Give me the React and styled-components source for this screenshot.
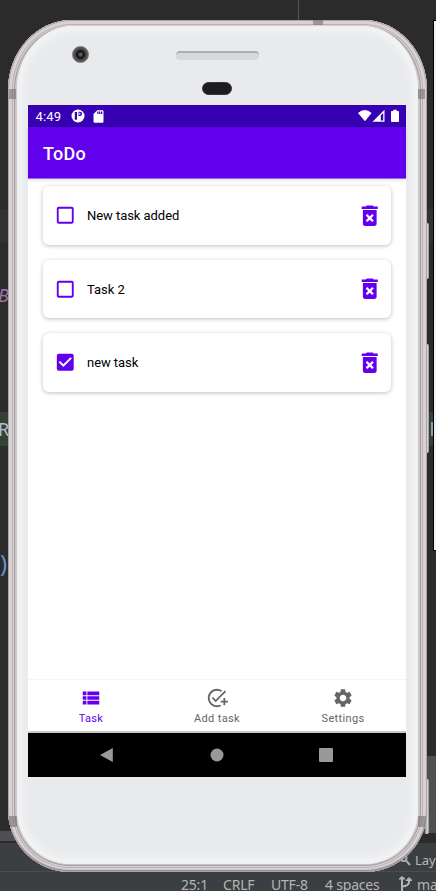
import React, { useState } from "react";
import styled, { createGlobalStyle, css } from "styled-components";
import {
  MdAddTask,
  MdCheckBox,
  MdCheckBoxOutlineBlank,
  MdDeleteForever,
  MdSdCard,
  MdSettings,
  MdViewList,
} from "react-icons/md";

const GlobalStyle = createGlobalStyle`
  * { box-sizing: border-box; }
  body { margin: 0; background: #2b2b2b; overflow: hidden; }
`;

const Desktop = styled.div`
  position: relative;
  width: 436px;
  height: 891px;
  overflow: hidden;
  background: #2b2b2b;
`;

/* Editor window behind the emulator */
const Editor = styled.div`
  display: flex;
  flex-direction: column;
  height: 891px;
  font-family: "Noto Sans", "Open Sans", sans-serif;
`;

const CodeRow = styled.div`
  flex: none;
  display: flex;
  align-items: center;
  justify-content: space-between;
  height: ${(p) => p.$h}px;
  background: ${(p) => p.$bg || "#2b2b2b"};
  font: ${(p) => p.$font || '18px "Noto Sans", sans-serif'};
  line-height: 1;
  color: ${(p) => p.$color || "#a9b7c6"};
`;

const Glyph = styled.span`
  margin-left: ${(p) => p.$shift || 0}px;
`;

const Caret = styled.span`
  width: 3px;
  height: 14px;
  margin-right: 2px;
  background: #7f9fc4;
`;

const PanelRow = styled.div`
  flex: none;
  display: grid;
  grid-template-columns: 218px 218px;
  height: 85px;
`;

const PanelColumn = styled.div`
  display: flex;
  flex-direction: column;
`;

const Block = styled.div`
  flex: none;
  height: ${(p) => p.$h}px;
  background: ${(p) => p.$bg};
`;

const ToolStrip = styled.div`
  flex: none;
  display: flex;
  align-items: center;
  justify-content: flex-end;
  gap: 4px;
  height: 28px;
  padding-top: 5px;
  background: #3c3f41;
  color: #b4b7b9;
  font-size: 13px;
  white-space: nowrap;
`;

const ToolLabel = styled.span`
  width: 21px;
`;

const StatusStrip = styled.div`
  flex: none;
  display: grid;
  grid-template-columns: 42px 48px 54px 73px 19px 40px;
  height: 20px;
  padding-left: 181px;
  border-top: 1px solid #4a4d4f;
  background: #3c3f41;
  color: #b2b5b7;
  font-size: 14px;
  line-height: 25px;
  letter-spacing: -0.2px;
  white-space: nowrap;
`;

const BranchIcon = styled.svg`
  margin-top: 4px;
`;

const TopGuide = styled.div`
  position: absolute;
  left: 298px;
  top: 0;
  width: 1px;
  height: 21px;
  background: #555;
`;

const SideWindow = styled.div`
  position: absolute;
  left: 433px;
  top: 20px;
  width: 6px;
  height: 531px;
  border: 1px solid #000;
  background: #f3f3f3;
`;

/* Device */
const SideButton = styled.div`
  position: absolute;
  left: 425px;
  top: ${(p) => p.$top}px;
  width: 4px;
  height: ${(p) => p.$h}px;
  border-radius: 0 2px 2px 0;
  background: linear-gradient(90deg, #8f8c8d, #d8d6d5 60%, #8e8c8b);
`;

const Phone = styled.div`
  position: absolute;
  left: 8px;
  top: 20px;
  width: 419px;
  height: 852px;
  padding: 6px 9px 8px;
  border-radius: 64px 64px 62px 62px / 70px 70px 62px 62px;
  overflow: hidden;
  background: #d3cccf;
  box-shadow:
    inset 0 0 0 1px #aba3a6,
    inset 0 -2px 1px 0 #8d8589,
    inset 0 0 0 4px #d9d2d5,
    inset 0 0 0 5px #b9b1b4,
    inset 0 0 0 6px #d9d3d6,
    inset 0 0 0 7px #a39d9f,
    inset 0 0 0 8px #c9c5c7;
`;

const Antenna = styled.div`
  position: absolute;
  left: ${(p) => p.$x}px;
  top: ${(p) => p.$y}px;
  width: ${(p) => p.$w}px;
  height: ${(p) => p.$h}px;
  background: rgba(118, 110, 114, 0.6);
`;

const Face = styled.div`
  display: flex;
  flex-direction: column;
  height: 838px;
  padding: 0 11px;
  border-radius: 56px 56px 54px 54px / 64px 64px 54px 54px;
  background: #e9eaec;
  box-shadow:
    inset 0 0 0 1px #eceeef,
    inset 0 0 10px 4px #f6f7f8;
`;

const Forehead = styled.div`
  flex: none;
  display: grid;
  grid-template-columns: 148px 83px 1fr;
  height: 79px;
`;

const Camera = styled.div`
  width: 17px;
  height: 17px;
  margin: 20px 0 0 44px;
  border: 1px solid #777;
  border-radius: 50%;
  background: radial-gradient(circle at 50% 50%, #685f3c 0 1px, #111824 3px, #1b1c22 4px, #4c4c4e 5.5px, #606063 8px);
`;

const SpeakerColumn = styled.div`
  display: flex;
  flex-direction: column;
  padding-top: 25px;
  gap: 22px;
`;

const Speaker = styled.div`
  width: 83px;
  height: 9px;
  border-radius: 4px;
  border-top: 2px solid #a9adb5;
  background: #d7d9dc;
`;

const Sensor = styled.div`
  width: 30px;
  height: 13px;
  margin-left: 26px;
  border-radius: 7px;
  background: #1d1d21;
  border: 1px solid #34343a;
`;

const Screen = styled.div`
  flex: none;
  display: flex;
  flex-direction: column;
  width: 378px;
  height: 672px;
  background: #fff;
  font-family: Roboto, sans-serif;
`;

const StatusBar = styled.div`
  flex: none;
  display: flex;
  align-items: center;
  height: 22px;
  padding: 0 7px 0 7.5px;
  background: #3700b3;
  color: #fff;
  font-size: 13px;
  font-weight: 400;
  letter-spacing: 0.15px;
`;

const Clock = styled.span`
  width: 35px;
`;

const StatusIcons = styled.div`
  display: flex;
  align-items: center;
  gap: ${(p) => p.$gap}px;
  margin-left: ${(p) => (p.$end ? "auto" : "0")};
  svg { display: block; }
`;

const AppBar = styled.header`
  flex: none;
  position: relative;
  display: flex;
  align-items: center;
  height: 52px;
  padding: 2px 15px 0;
  border-bottom: 1px solid #9e6bee;
  background: #6200ee;
  box-shadow: 0 1px 3px rgba(0, 0, 0, 0.15);
  color: #fff;
  font-size: 18px;
  font-weight: 500;
  letter-spacing: 0.3px;
`;

const TaskList = styled.main`
  flex: 1;
  display: flex;
  flex-direction: column;
  gap: 15px;
  padding: 7px 15px;
`;

const TaskCard = styled.article`
  flex: none;
  display: flex;
  align-items: center;
  height: 58.6px;
  padding: 0 7.5px 0 12px;
  border-radius: 6px;
  background: #fff;
  box-shadow: 0 1px 4px rgba(0, 0, 0, 0.25);
  font-size: 13px;
  color: #000;
`;

const IconButton = styled.button`
  flex: none;
  display: flex;
  padding: 0;
  border: 0;
  background: none;
  color: #6200ee;
`;

const CheckButton = styled(IconButton)`
  margin-left: -1.5px;
`;

const TaskTitle = styled.span`
  flex: 1;
  margin-left: 11px;
  padding-top: 1px;
  letter-spacing: -0.05px;
`;

const BottomNav = styled.nav`
  flex: none;
  display: grid;
  grid-template-columns: repeat(3, 1fr);
  height: 54px;
  border-top: 1px solid #f5f5f5;
  border-bottom: 2px solid #c7cac9;
`;

const NavItem = styled.button`
  display: flex;
  flex-direction: column;
  align-items: center;
  padding: 7px 0 0;
  border: 0;
  background: none;
  gap: 3px;
  font: 11px/14px Roboto, sans-serif;
  letter-spacing: 0.35px;
  color: #666;
  ${(p) => p.$active && css`color: #6200ee;`}
`;

const SystemNav = styled.div`
  flex: none;
  display: grid;
  grid-template-columns: 109px 109px 109px;
  justify-content: center;
  place-items: center;
  height: 44px;
  background: #000;
`;

const initialTasks = [
  { id: 1, title: "New task added", done: false },
  { id: 2, title: "Task 2", done: false },
  { id: 3, title: "new task", done: true },
];

const tabs = [
  { label: "Task", Icon: MdViewList },
  { label: "Add task", Icon: MdAddTask },
  { label: "Settings", Icon: MdSettings },
];

function BackgroundEditor() {
  return (
    <Editor>
      <CodeRow $h={209} />
      <CodeRow $h={34} $bg="#323232" />
      <CodeRow $h={35} />
      <CodeRow $h={34} $font='italic 18px "Noto Sans", sans-serif' $color="#9876aa">
        <Glyph $shift={-2}>B</Glyph>
      </CodeRow>
      <CodeRow $h={100} />
      <CodeRow $h={34} $bg="#344134" $color="#a7bfd0">
        <Glyph $shift={-2}>R</Glyph>
        <Caret />
      </CodeRow>
      <CodeRow $h={100} />
      <CodeRow $h={34} $font='24px "Open Sans", sans-serif' $color="#6897d0">
        <Glyph $shift={0}>)</Glyph>
      </CodeRow>
      <CodeRow $h={176} />
      <PanelRow>
        <PanelColumn>
          <Block $h={75} $bg="#2b2b2b" />
          <Block $h={10} $bg="#4e5052" />
        </PanelColumn>
        <PanelColumn>
          <Block $h={77} $bg="#4e5052" />
          <Block $h={8} $bg="#2b2b2b" />
        </PanelColumn>
      </PanelRow>
      <Block $h={2} $bg="#2b2b2b" />
      <ToolStrip>
        <svg width="12" height="13" viewBox="0 0 12 13" fill="none" stroke="#a8abad" strokeWidth="2">
          <circle cx="4.5" cy="5" r="3" />
          <path d="M7 7.5L11 12" />
        </svg>
        <ToolLabel>Layo</ToolLabel>
      </ToolStrip>
      <StatusStrip>
        <span>25:1</span>
        <span>CRLF</span>
        <span>UTF-8</span>
        <span>4 spaces</span>
        <BranchIcon width="14" height="16" viewBox="0 0 14 16" fill="none" stroke="#b2b5b7" strokeWidth="2">
          <path d="M4 3V15M11 4V6Q11 10 4 10.5" />
          <path d="M1 3H7L4 .5ZM8 4.5H14L11 1.5Z" fill="#b2b5b7" strokeWidth="1" />
        </BranchIcon>
        <span>ma</span>
      </StatusStrip>
    </Editor>
  );
}

function AndroidStatusBar() {
  return (
    <StatusBar>
      <Clock>4:49</Clock>
      <StatusIcons $gap={6}>
        <svg width="14" height="14" viewBox="0 0 14 14">
          <circle cx="7" cy="7" r="6.5" fill="#fff" />
          <path d="M3.8 3H6V10.8H3.8ZM7.5 2.8H9A2.1 2.1 0 0 1 9 7H7.5Z" fill="#3700b3" />
          <path d="M8.2 3.8H9.3V5.8H8.2Z" fill="#fff" />
        </svg>
        <MdSdCard size={15} />
      </StatusIcons>
      <StatusIcons $gap={6} $end>
        <svg width="27" height="14" viewBox="0 0 27 14" fill="#fff">
          <path d="M0 4Q6.8-2 13.6 4L7 12.3Z" />
          <path d="M14.5 12.8L26.5 .8V12.8Z" />
          <path d="M22.8 6.2L25.2 4V11.6H22.8Z" fill="#3700b3" />
        </svg>
        <svg width="8" height="14" viewBox="0 0 8 14" fill="#fff">
          <path d="M2.3 .8H5.7V2H7.2Q8 2 8 3V12Q8 13 7.2 13H.8Q0 13 0 12V3Q0 2 .8 2H2.3Z" />
        </svg>
      </StatusIcons>
    </StatusBar>
  );
}

export default function App() {
  const [tasks, setTasks] = useState(initialTasks);
  const [tab, setTab] = useState("Task");

  const toggle = (id) =>
    setTasks((all) => all.map((t) => (t.id === id ? { ...t, done: !t.done } : t)));
  const remove = (id) => setTasks((all) => all.filter((t) => t.id !== id));

  return (
    <>
      <GlobalStyle />
      <Desktop>
        <BackgroundEditor />
        <TopGuide />
        <SideWindow />
        <SideButton $top={223} $h={56} />
        <SideButton $top={344} $h={109} />
        <SideButton $top={779} $h={55} />
        <Phone>
          <Face>
            <Forehead>
              <Camera />
              <SpeakerColumn>
                <Speaker />
                <Sensor />
              </SpeakerColumn>
            </Forehead>
            <Screen>
              <AndroidStatusBar />
              <AppBar>ToDo</AppBar>
              <TaskList>
                {tasks.map((task) => (
                  <TaskCard key={task.id}>
                    <CheckButton onClick={() => toggle(task.id)}>
                      {task.done ? <MdCheckBox size={22.5} /> : <MdCheckBoxOutlineBlank size={22.5} />}
                    </CheckButton>
                    <TaskTitle>{task.title}</TaskTitle>
                    <IconButton onClick={() => remove(task.id)}>
                      <MdDeleteForever size={27.5} />
                    </IconButton>
                  </TaskCard>
                ))}
              </TaskList>
              <BottomNav>
                {tabs.map(({ label, Icon }) => (
                  <NavItem key={label} $active={tab === label} onClick={() => setTab(label)}>
                    <Icon size={22} />
                    {label}
                  </NavItem>
                ))}
              </BottomNav>
              <SystemNav>
                <svg width="16" height="14" viewBox="0 0 16 14"><path d="M0 7L12.8 0V14Z" fill="#999" /></svg>
                <svg width="14" height="14" viewBox="0 0 14 14"><circle cx="7" cy="7" r="6.5" fill="#999" /></svg>
                <svg width="14" height="14" viewBox="0 0 14 14"><rect width="14" height="14" rx="1" fill="#999" /></svg>
              </SystemNav>
            </Screen>
          </Face>
          <Antenna $x={305} $y={0} $w={10} $h={5} />
          <Antenna $x={1} $y={69} $w={7} $h={10} />
          <Antenna $x={410} $y={69} $w={7} $h={10} />
          <Antenna $x={1} $y={796} $w={8} $h={11} />
          <Antenna $x={410} $y={796} $w={8} $h={11} />
        </Phone>
      </Desktop>
    </>
  );
}
